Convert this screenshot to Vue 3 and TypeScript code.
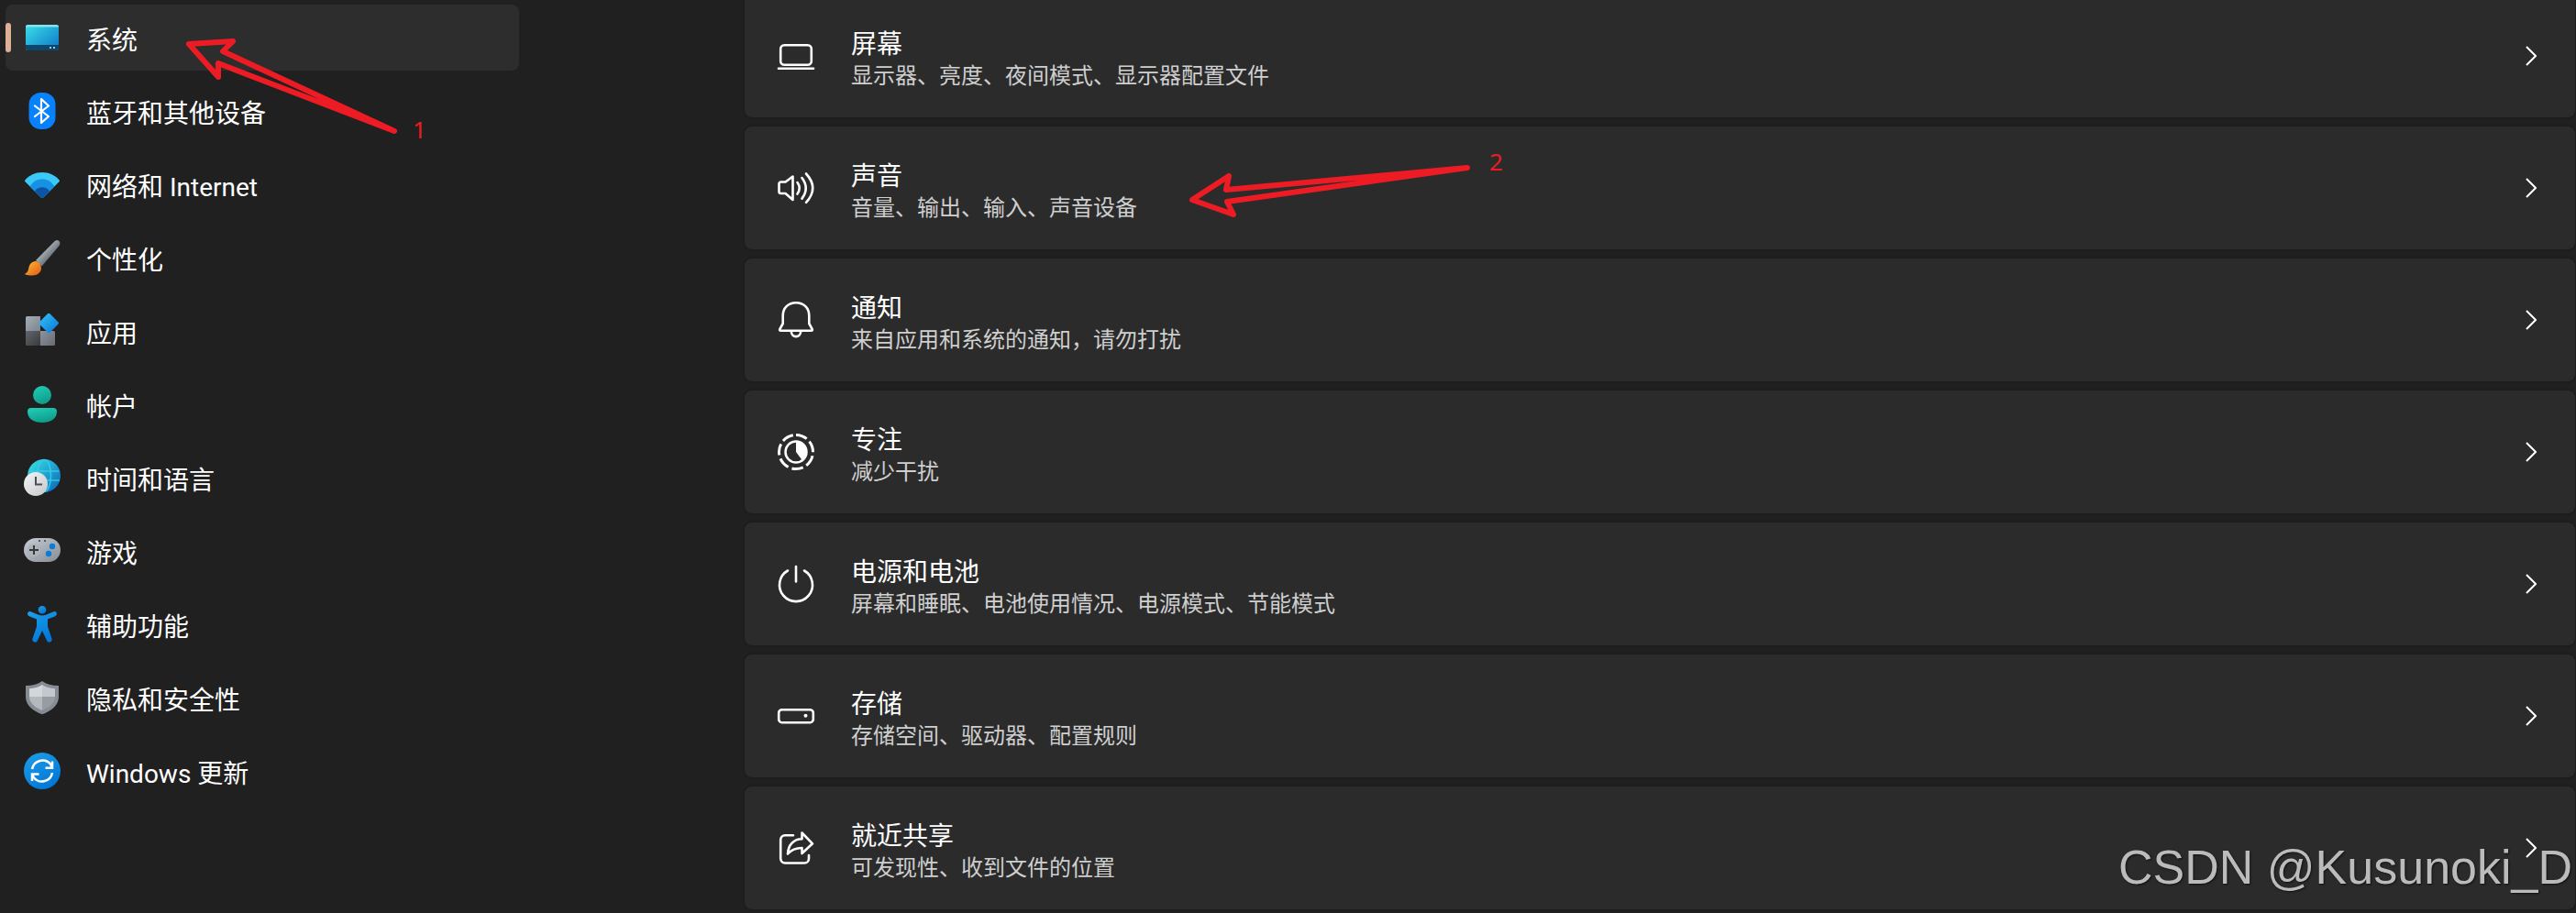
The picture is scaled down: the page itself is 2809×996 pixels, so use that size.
<script setup lang="ts">
interface NavItem { id: string; label: string }
interface Card { id: string; title: string; detail: string }

const nav: NavItem[] = [
  { id: 'system', label: '系统' },
  { id: 'bluetooth', label: '蓝牙和其他设备' },
  { id: 'network', label: '网络和 Internet' },
  { id: 'personal', label: '个性化' },
  { id: 'apps', label: '应用' },
  { id: 'account', label: '帐户' },
  { id: 'time', label: '时间和语言' },
  { id: 'games', label: '游戏' },
  { id: 'access', label: '辅助功能' },
  { id: 'privacy', label: '隐私和安全性' },
  { id: 'update', label: 'Windows 更新' },
]

const cards: Card[] = [
  { id: 'display', title: '屏幕', detail: '显示器、亮度、夜间模式、显示器配置文件' },
  { id: 'sound', title: '声音', detail: '音量、输出、输入、声音设备' },
  { id: 'notify', title: '通知', detail: '来自应用和系统的通知，请勿打扰' },
  { id: 'focus', title: '专注', detail: '减少干扰' },
  { id: 'power', title: '电源和电池', detail: '屏幕和睡眠、电池使用情况、电源模式、节能模式' },
  { id: 'storage', title: '存储', detail: '存储空间、驱动器、配置规则' },
  { id: 'share', title: '就近共享', detail: '可发现性、收到文件的位置' },
]
</script>

<template>
  <div class="settings">
    <svg class="defs" width="0" height="0" aria-hidden="true">
      <defs>
        <linearGradient id="g-screen" x1="0" y1="0" x2="1" y2="1"><stop offset="0" stop-color="#3bdfe8" /><stop offset="1" stop-color="#0c74c8" /></linearGradient>
        <linearGradient id="g-blue" x1="0" y1="0" x2="0.6" y2="1"><stop offset="0" stop-color="#1f9fe8" /><stop offset="1" stop-color="#0078d8" /></linearGradient>
        <linearGradient id="g-handle" x1="0.3" y1="0.3" x2="0.7" y2="0.7"><stop offset="0" stop-color="#b5bcc4" /><stop offset="1" stop-color="#5c646b" /></linearGradient>
        <linearGradient id="g-tip" x1="0" y1="0" x2="1" y2="1"><stop offset="0" stop-color="#ffc22e" /><stop offset="1" stop-color="#e2551a" /></linearGradient>
        <linearGradient id="g-grey" x1="0" y1="0" x2="1" y2="1"><stop offset="0" stop-color="#a5adb8" /><stop offset="1" stop-color="#7c848c" /></linearGradient>
        <linearGradient id="g-grey2" x1="0" y1="0" x2="1" y2="1"><stop offset="0" stop-color="#8e949e" /><stop offset="1" stop-color="#666b74" /></linearGradient>
        <linearGradient id="g-dark" x1="0" y1="0" x2="1" y2="1"><stop offset="0" stop-color="#62666a" /><stop offset="1" stop-color="#383b3e" /></linearGradient>
        <linearGradient id="g-diamond" x1="0" y1="0" x2="1" y2="1"><stop offset="0" stop-color="#35c6f6" /><stop offset="1" stop-color="#0a72d8" /></linearGradient>
        <linearGradient id="g-teal" x1="0" y1="0" x2="0.4" y2="1"><stop offset="0" stop-color="#22cfb8" /><stop offset="1" stop-color="#0f9e8c" /></linearGradient>
        <linearGradient id="g-globe" x1="0" y1="0" x2="1" y2="1"><stop offset="0.1" stop-color="#35d8e4" /><stop offset="1" stop-color="#0961b8" /></linearGradient>
        <linearGradient id="g-clock" x1="0" y1="0" x2="1" y2="1"><stop offset="0" stop-color="#f4f5f6" /><stop offset="1" stop-color="#c4c7ca" /></linearGradient>
        <linearGradient id="g-pad" x1="0" y1="0" x2="1" y2="1"><stop offset="0" stop-color="#c8ced6" /><stop offset="1" stop-color="#858c94" /></linearGradient>
      </defs>
    </svg>

    <nav class="sidebar">
      <a v-for="(item, i) in nav" :key="item.id" href="#" class="nav-item" :class="{ active: i === 0 }" :aria-current="i === 0 ? 'page' : undefined">
        <svg class="icon" viewBox="0 0 40 40" aria-hidden="true">
          <g v-if="item.id === 'system'">
            <rect x="2" y="6" width="36" height="28" rx="2.5" fill="url(#g-screen)" />
            <path d="M2 8.5A2.5 2.5 0 0 1 4.500 6h31A2.500 2.500 0 0 1 38 8.500H2z" fill="#7fe6ee" />
            <path d="M2 28h36v3.500A2.500 2.500 0 0 1 35.500 34h-31A2.500 2.500 0 0 1 2 31.500z" fill="#0e4569" />
            <path d="M28 30h2v2h-2zM32 30h2v2h-2z" fill="#a7c4d6" />
          </g>
          <g v-else-if="item.id === 'bluetooth'">
            <rect x="5.500" y="0" width="29" height="40" rx="13" fill="#0782fb" />
            <path d="M12 14.500L27 26l-8 7V7l8 7.500L12 26" fill="none" stroke="#fff" stroke-width="2.200" stroke-linejoin="round" stroke-linecap="round" />
          </g>
          <g v-else-if="item.id === 'network'">
            <path d="M1.500 17.200a1.200 1.200 0 0 1-.2-1.700C6 10 12.500 7 20 7s14 3 18.700 8.500a1.200 1.200 0 0 1-.2 1.700L21.200 34.500a1.700 1.700 0 0 1-2.400 0z" fill="#3bc9f6" />
            <path d="M6.700 22.400C10 17 14 14.500 20 14.500s10 2.500 13.300 7.900L21.200 34.500a1.700 1.700 0 0 1-2.400 0z" fill="#1791e2" />
            <path d="M12 27.500c2-2.800 4.800-4.200 8-4.200s6 1.400 8 4.200l-6.800 7a1.700 1.700 0 0 1-2.400 0z" fill="#0b55a4" />
          </g>
          <g v-else-if="item.id === 'personal'">
            <path d="M13 23L32.500 3.200c2-2 4-2.800 5.700-1.500 1.800 1.500 1.500 3.600 0 5.800L19.500 29.500z" fill="url(#g-handle)" />
            <path d="M.8 38c3.600-1.700 4-4 4.600-7C6.200 26.500 9.500 24 13.500 24c3 1 5 3.500 5.500 7 .2 5.500-4.500 8.500-9.500 8.500-3.500 0-6.500-.5-8.700-1.500z" fill="url(#g-tip)" />
          </g>
          <g v-else-if="item.id === 'apps'">
            <path d="M3.500 4H18v16H2V5.500A1.500 1.500 0 0 1 3.500 4z" fill="url(#g-grey)" />
            <path d="M2 20h16v16H3.500A1.500 1.500 0 0 1 2 34.500z" fill="url(#g-dark)" />
            <path d="M18 20h14.500a1.500 1.500 0 0 1 1.500 1.500v13a1.500 1.500 0 0 1-1.500 1.500H18z" fill="url(#g-grey2)" />
            <path d="M26 1.300a1.700 1.700 0 0 1 2.400 0l9 9a1.700 1.700 0 0 1 0 2.400l-9 9a1.700 1.700 0 0 1-2.400 0l-9-9a1.700 1.700 0 0 1 0-2.400z" fill="url(#g-diamond)" />
          </g>
          <g v-else-if="item.id === 'account'">
            <circle cx="20" cy="10" r="10" fill="url(#g-teal)" />
            <path d="M8 24h24a4 4 0 0 1 4 4c0 8-7 12-16 12S4 36 4 28a4 4 0 0 1 4-4z" fill="url(#g-teal)" />
          </g>
          <g v-else-if="item.id === 'time'">
            <circle cx="22" cy="18" r="18" fill="url(#g-globe)" />
            <g fill="none" stroke="#38cfe6" stroke-width="1.700" opacity=".85"><path d="M5.500 13h33M5 23h34" /><ellipse cx="22" cy="18" rx="7.500" ry="17.500" /></g>
            <circle cx="13" cy="27" r="13" fill="url(#g-clock)" />
            <path d="M13 19v8.500h7" fill="none" stroke="#4b4f54" stroke-width="2" />
          </g>
          <g v-else-if="item.id === 'games'">
            <rect x="0" y="6" width="40" height="26" rx="13" fill="url(#g-pad)" />
            <circle cx="11" cy="19" r="7" fill="#aeb3b9" />
            <path d="M11 14v10M6 19h10" stroke="#35383b" stroke-width="2" />
            <circle cx="31" cy="15" r="3.200" fill="#0c7bd6" /><circle cx="27" cy="23" r="3.200" fill="#0c7bd6" />
            <circle cx="17" cy="9" r="1" fill="#35383b" /><circle cx="23" cy="9" r="1" fill="#35383b" />
          </g>
          <g v-else-if="item.id === 'access'" fill="url(#g-blue)">
            <circle cx="20" cy="4.300" r="4.300" />
            <path d="M7.500 6.200l8.500 3.600q4 1.200 8 0l8.500-3.600c3.300-1 4.800 3.500 1.800 5L26 14.500v8l4.500 13.300c1 3.500-3.700 5.500-5.300 2.200L20 27l-5.200 11c-1.600 3.300-6.300 1.300-5.300-2.200L14 22.500v-8l-8.300-3.300c-3-1.500-1.500-6 1.800-5z" />
          </g>
          <g v-else-if="item.id === 'privacy'">
            <path d="M20 2c4.500 3.200 10.500 5 18 5v12c0 9.500-8 15.500-18 19.300C10 34.500 2 28.500 2 19V7c7.500 0 13.500-1.800 18-5z" fill="#868c93" />
            <path d="M20 6c4 2.500 8.500 4 14 4.200V19H20z" fill="#c3c8cc" /><path d="M20 6c-4 2.500-8.500 4-14 4.200V19h14z" fill="#d3d7db" />
            <path d="M6 19h14v15C12 30.700 6 26 6 19z" fill="#b4b9be" /><path d="M34 19H20v15c8-3.300 14-8 14-15z" fill="#969ca2" />
          </g>
          <g v-else>
            <circle cx="20" cy="20" r="20" fill="url(#g-blue)" />
            <g fill="none" stroke="#fff" stroke-width="2.500"><path d="M9 18a11.500 11.500 0 0 1 20-5.500l1.500 3" /><path d="M31 22a11.500 11.500 0 0 1-20 5.500l-1.500-3" /><path d="M31 9.500v7.300h-7.500M9 31v-7.500h7.500" /></g>
          </g>
        </svg>
        <span class="nav-label">{{ item.label }}</span>
      </a>
    </nav>

    <main class="cards">
      <button v-for="card in cards" :key="card.id" type="button" class="card">
        <svg class="icon line" viewBox="0 0 40 40" aria-hidden="true">
          <g v-if="card.id === 'display'"><rect x="3.200" y="8.200" width="33.600" height="21.600" rx="4" /><path d="M1 33.800h38" /></g>
          <g v-else-if="card.id === 'sound'"><path d="M16.500 7.500v25.500L8.500 26H3.500a2 2 0 0 1-2-2v-8.500a2 2 0 0 1 2-2h5z" /><path d="M21.500 14q4.500 6.300 0 12.600M26.500 9q8.500 11.300 0 22.600M31 4.500q14.500 15.700 0 31.400" /></g>
          <g v-else-if="card.id === 'notify'"><path d="M20 1.200c-8.500 0-14.300 6-14.300 14v8.800L2.300 30.200c-.4.900 0 1.600 1 1.600h33.400c1 0 1.400-.7 1-1.600L34.300 24v-8.800c0-8-5.800-14-14.300-14z" /><path d="M14.800 32.500c.3 7.500 10.100 7.500 10.400 0" /></g>
          <g v-else-if="card.id === 'focus'"><circle cx="20" cy="20" r="18.500" stroke-width="3" stroke-linecap="butt" stroke-dasharray="12.600 4" transform="rotate(-90 20 20)" /><circle cx="20" cy="20" r="11.500" stroke-width="2.500" /><path d="M20 8.500a11.500 11.500 0 0 1 6.800 20.800L20 20z" fill="#fff" stroke="none" /></g>
          <g v-else-if="card.id === 'power'"><path d="M20 1v16.500M11 5.500a18 18 0 1 0 18 0" /></g>
          <g v-else-if="card.id === 'storage'"><rect x="1.200" y="13.200" width="37.600" height="14" rx="3.500" /><circle cx="30.500" cy="19.800" r="2" fill="#fff" stroke="none" /></g>
          <g v-else><path d="M17 6.200H8A5 5 0 0 0 3.200 11v20.700a5 5 0 0 0 4.800 4.800h21.200a4.800 4.800 0 0 0 4.800-4.800V28" /><path d="M26.500 3.500L38 15.300 26.500 26V20c-7 0-11.500 2-15.500 6.500C11.500 17 17 10.500 26.500 10.300z" /></g>
        </svg>
        <span class="text"><span class="title">{{ card.title }}</span><span class="detail">{{ card.detail }}</span></span>
        <svg class="chevron" viewBox="0 0 12 22" aria-hidden="true"><path d="M1 1l10 10L1 21" fill="none" stroke="#fff" stroke-width="2" /></svg>
      </button>
    </main>

    <svg class="arrow first" viewBox="0 0 240 110" aria-hidden="true"><path d="M6 8L54 5 43 16 230 103 38 29V44z" /></svg>
    <span class="mark one">1</span>
    <svg class="arrow second" viewBox="0 0 320 60" aria-hidden="true"><path d="M10 38L50 12 47 27 310 3 48 40 55 54z" /></svg>
    <span class="mark two">2</span>
    <span class="watermark">CSDN @Kusunoki_D</span>
  </div>
</template>

<style>
body { background: #202020; }
</style>

<style scoped>
.settings {
  position: relative;
  display: flex;
  height: 100vh;
  overflow: hidden;
  box-sizing: border-box;
  background: #202020;
  color: #fff;
  font-family: Roboto, "Noto Sans CJK SC", sans-serif;
}
.defs { position: absolute; }
.sidebar {
  flex: none;
  display: flex;
  flex-direction: column;
  gap: 8px;
  width: 560px;
  padding: 5px 246px 0 6px;
}
.nav-item {
  position: relative;
  display: flex;
  align-items: center;
  gap: 28px;
  height: 72px;
  padding-left: 20px;
  border-radius: 8px;
  color: #fff;
  font-size: 28px;
  line-height: 40px;
  text-decoration: none;
}
.nav-label { padding-top: 8px; }
.nav-item.active { background: #2d2d2d; }
.nav-item.active::before {
  content: "";
  position: absolute;
  left: 0;
  top: 20px;
  width: 6px;
  height: 32px;
  border-radius: 3px;
  background: #dcb196;
}
.icon { flex: none; width: 40px; height: 40px; overflow: visible; }
.line { fill: none; stroke: #fff; stroke-width: 2.6; stroke-linejoin: round; stroke-linecap: round; }
.cards {
  flex: 1;
  display: flex;
  flex-direction: column;
  gap: 10px;
  min-width: 0;
  margin-top: -6px;
  padding-right: 1px;
}
.card {
  flex: none;
  display: flex;
  align-items: center;
  gap: 40px;
  height: 134px;
  padding: 0 42px 0 36px;
  border: 0;
  border-radius: 8px;
  background: #2b2b2b;
  box-shadow: 0 0 0 2px #1d1d1d;
  color: #fff;
  font-family: inherit;
  text-align: left;
}
.text { flex: 1; display: flex; flex-direction: column; padding-top: 8px; }
.title { font-size: 28px; line-height: 36px; }
.detail { color: #cfcfcf; font-size: 24px; line-height: 32px; }
.chevron { flex: none; width: 12px; height: 22px; }
.arrow { position: absolute; fill: none; stroke: #ed1c24; stroke-width: 6; stroke-linejoin: round; pointer-events: none; }
.first { left: 200px; top: 40px; width: 240px; height: 110px; }
.second { left: 1290px; top: 180px; width: 320px; height: 60px; overflow: visible; }
.mark { position: absolute; color: #ed1c24; font-family: "Noto Sans", sans-serif; font-size: 26px; line-height: 32px; }
.one { left: 450px; top: 125px; }
.two { left: 1624px; top: 160px; }
.watermark {
  position: absolute;
  right: 4px;
  bottom: 20px;
  color: #bbb;
  font-family: "Liberation Sans", Arial, sans-serif;
  font-size: 52px;
  line-height: 60px;
  text-shadow: 1px 1px 2px #111;
  pointer-events: none;
}
</style>
